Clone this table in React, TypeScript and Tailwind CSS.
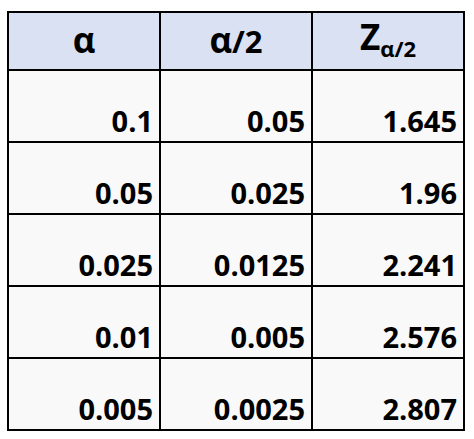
import React from "react";

const rows = [
  ["0.1", "0.05", "1.645"],
  ["0.05", "0.025", "1.96"],
  ["0.025", "0.0125", "2.241"],
  ["0.01", "0.005", "2.576"],
  ["0.005", "0.0025", "2.807"],
];

export default function App() {
  return (
    <div className="w-[474px] h-[439px] bg-white pt-[11px] pl-[7px]" style={{ fontFamily: '"Open Sans", "Noto Sans", sans-serif' }}>
      <div className="grid grid-cols-[150px_150px_150px] grid-rows-[56px_70px_70px_70px_70px_70px] gap-[2px] p-[2px] bg-black w-[458px] font-bold text-black">
        <div className="bg-[#D9E1F2] flex justify-center items-end pb-[12px] leading-none">
          <span className="text-[35px]">α</span>
        </div>
        <div className="bg-[#D9E1F2] flex justify-center items-end pb-[12px] leading-none">
          <span className="whitespace-nowrap">
            <span className="text-[35px]">α</span>
            <span className="text-[31px]">/2</span>
          </span>
        </div>
        <div className="bg-[#D9E1F2] flex justify-center items-end pb-[10px] leading-none">
          <span className="whitespace-nowrap">
            <span className="text-[35px]">Z</span>
            <span className="text-[22px] align-[-7px]">α/2</span>
          </span>
        </div>
        {rows.map((r, i) =>
          r.map((v, j) => (
            <div key={`${i}-${j}`} className="bg-[#F9F9F9] flex justify-end items-end pr-[6px] pb-[6px] text-[29px] leading-none">
              {v}
            </div>
          ))
        )}
      </div>
    </div>
  );
}
